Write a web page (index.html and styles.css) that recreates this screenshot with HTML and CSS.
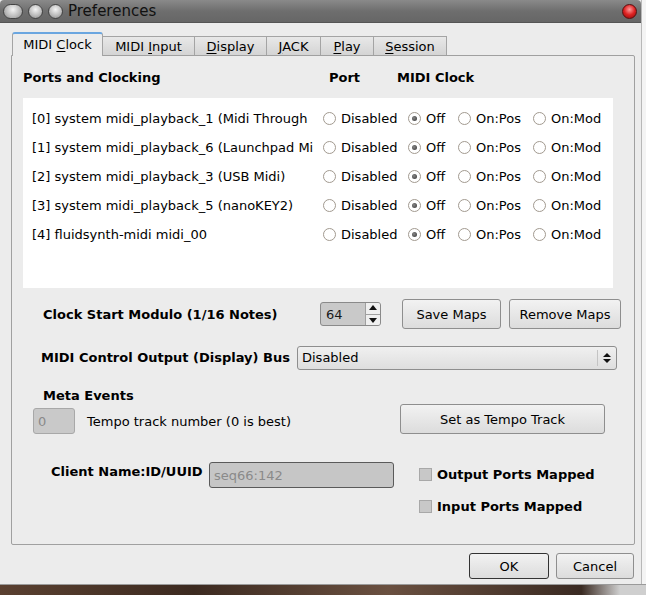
FILE: index.html
```html
<!DOCTYPE html>
<html>
<head>
<meta charset="utf-8">
<link rel="stylesheet" href="styles.css">
</head>
<body>
<div class="screen">
  <div class="window">
    <div class="titlebar">
      <div class="ghost">
        <div>with an incorrect port %ld", src);</div>
        <div>n incorrect port %ld", myport);</div>
      </div>
      <div class="wbtns">
        <span class="wb pill"></span>
        <span class="wb ball"></span>
        <span class="wb ball"></span>
      </div>
      <div class="title">Preferences</div>
      <span class="close"></span>
    </div>

    <div class="body">
      <div class="tabs">
        <div class="tab active"><span>MIDI <u>C</u>lock</span></div>
        <div class="tab"><span>MIDI <u>I</u>nput</span></div>
        <div class="tab"><span><u>D</u>isplay</span></div>
        <div class="tab"><span><u>J</u>ACK</span></div>
        <div class="tab"><span><u>P</u>lay</span></div>
        <div class="tab"><span><u>S</u>ession</span></div>
      </div>
      <div class="panel">
        <div class="hdr">
          <span class="hdr-title">Ports and Clocking</span>
          <span class="hdr-port">Port</span>
          <span class="hdr-clock">MIDI Clock</span>
        </div>
        <div class="ports">
          <div class="prow">
            <span class="pname">[0] system midi_playback_1 (Midi Through</span>
            <span class="opt"><i class="radio"></i>Disabled</span>
            <span class="opt"><i class="radio on"></i>Off</span>
            <span class="opt"><i class="radio"></i>On:Pos</span>
            <span class="opt"><i class="radio"></i>On:Mod</span>
          </div>
          <div class="prow">
            <span class="pname">[1] system midi_playback_6 (Launchpad Mini)</span>
            <span class="opt"><i class="radio"></i>Disabled</span>
            <span class="opt"><i class="radio on"></i>Off</span>
            <span class="opt"><i class="radio"></i>On:Pos</span>
            <span class="opt"><i class="radio"></i>On:Mod</span>
          </div>
          <div class="prow">
            <span class="pname">[2] system midi_playback_3 (USB Midi)</span>
            <span class="opt"><i class="radio"></i>Disabled</span>
            <span class="opt"><i class="radio on"></i>Off</span>
            <span class="opt"><i class="radio"></i>On:Pos</span>
            <span class="opt"><i class="radio"></i>On:Mod</span>
          </div>
          <div class="prow">
            <span class="pname">[3] system midi_playback_5 (nanoKEY2)</span>
            <span class="opt"><i class="radio"></i>Disabled</span>
            <span class="opt"><i class="radio on"></i>Off</span>
            <span class="opt"><i class="radio"></i>On:Pos</span>
            <span class="opt"><i class="radio"></i>On:Mod</span>
          </div>
          <div class="prow">
            <span class="pname">[4] fluidsynth-midi midi_00</span>
            <span class="opt"><i class="radio"></i>Disabled</span>
            <span class="opt"><i class="radio on"></i>Off</span>
            <span class="opt"><i class="radio"></i>On:Pos</span>
            <span class="opt"><i class="radio"></i>On:Mod</span>
          </div>
        </div>

        <div class="row clock-row">
          <span class="lbl b clock-lbl">Clock Start Modulo (1/16 Notes)</span>
          <div class="spin">
            <span class="spin-val">64</span>
            <span class="spin-arrows">
              <span class="sa up"></span>
              <span class="sa down"></span>
            </span>
          </div>
          <button class="btn save">Save Maps</button>
          <button class="btn remove">Remove Maps</button>
        </div>

        <div class="row combo-row">
          <span class="lbl b combo-lbl">MIDI Control Output (Display) Bus</span>
          <div class="combo">
            <span class="combo-val">Disabled</span>
            <span class="combo-sep"></span>
            <span class="combo-arr">
              <span class="ca up"></span>
              <span class="ca down"></span>
            </span>
          </div>
        </div>

        <div class="meta-lbl b">Meta Events</div>
        <div class="row tempo-row">
          <span class="edit small">0</span>
          <span class="lbl tempo-lbl">Tempo track number (0 is best)</span>
          <button class="btn tempo-btn">Set as Tempo Track</button>
        </div>

        <div class="client">
          <span class="lbl b client-lbl">Client Name:ID/UUID</span>
          <span class="edit client-edit">seq66:142</span>
          <div class="checks">
            <div class="chk"><i class="box"></i><span class="b">Output Ports Mapped</span></div>
            <div class="chk"><i class="box"></i><span class="b">Input Ports Mapped</span></div>
          </div>
        </div>
      </div>

      <div class="footer">
        <button class="btn ok">OK</button>
        <button class="btn cancel">Cancel</button>
      </div>
    </div>
  </div>
  <div class="desk"></div>
</div>
</body>
</html>
```

FILE: styles.css
```css
* { box-sizing: border-box; }
html, body { margin: 0; padding: 0; }
body {
  width: 646px;
  height: 595px;
  overflow: hidden;
  background: #f4f4f4;
  font-family: "DejaVu Sans", sans-serif;
  font-size: 13px;
  color: #000;
}
.screen { width: 646px; height: 595px; display: flex; flex-direction: column; }
.window {
  width: 642px;
  height: 584px;
  background: #ececec;
  border-right: 1px solid #b8b8b8;
  display: flex;
  flex-direction: column;
}
.desk {
  height: 11px;
  background: linear-gradient(90deg, #5a4030 0%, #3c2a20 30%, #6a5040 60%, #3a2a22 90%, #cfcfcf 96%);
  border-top: 1px solid #9a9a9a;
}

/* title bar */
.titlebar {
  position: relative;
  height: 23px;
  background: linear-gradient(#8a8a8a, #6e6e6e 50%, #666 100%);
  border-bottom: 1px solid #555;
  display: flex;
  align-items: center;
  overflow: hidden;
  border-radius: 4px 4px 0 0;
}
.ghost {
  position: absolute;
  left: 2px;
  top: -4px;
  font-family: "DejaVu Sans Mono", monospace;
  font-size: 15px;
  line-height: 15px;
  color: rgba(200,200,200,0.26);
  white-space: pre;
}
.ghost div:first-child { padding-left: 6px; }
.wbtns { display: flex; align-items: center; gap: 5px; margin-left: 3px; position: relative; }
.wb {
  display: inline-block;
  height: 15px;
  border: 1px solid #444;
  background: radial-gradient(circle at 50% 35%, #f4f4f4 0%, #bdbdbd 55%, #8c8c8c 100%);
}
.pill { width: 20px; border-radius: 8px; }
.ball { width: 15px; border-radius: 50%; }
.title {
  position: relative;
  margin-left: 5px;
  font-size: 15px;
  color: #111;
}
.close {
  position: absolute;
  right: 4px;
  top: 4px;
  width: 15px;
  height: 15px;
  border-radius: 50%;
  border: 1px solid #5a1010;
  background: radial-gradient(circle at 50% 35%, #ff9a9a 0%, #d22 50%, #8a0a0a 100%);
}

/* body */
.body { flex: 1; display: flex; flex-direction: column; padding: 10px 0 0 11px; }
.tabs { display: flex; align-items: flex-end; height: 22px; padding-left: 1px; position: relative; z-index: 2; }
.tab {
  height: 19px;
  display: flex;
  align-items: center;
  justify-content: center;
  border: 1px solid #a4a4a4;
  border-bottom: none;
  border-left: none;
  background: linear-gradient(#e8e8e8, #d4d4d4);
  font-size: 13px;
  white-space: nowrap;
}
.tab.active {
  width: 91px;
  height: 24px;
  border-left: 1px solid #a4a4a4;
  border-top: 2px solid #6aa6e0;
  border-radius: 3px 3px 0 0;
  background: #ececec;
  margin-bottom: -1px;
  padding-bottom: 1px;
}
.tab:nth-child(2) { width: 92px; }
.tab:nth-child(3) { width: 72px; }
.tab:nth-child(4) { width: 54px; }
.tab:nth-child(5) { width: 53px; }
.tab:nth-child(6) { width: 73px; }
u { text-decoration: underline; text-underline-offset: 2px; }

.panel {
  width: 624px;
  height: 490px;
  border: 1px solid #a0a0a0;
  border-radius: 0 2px 2px 2px;
  background: #ececec;
  display: flex;
  flex-direction: column;
}
.b { font-weight: bold; }

.hdr { display: flex; align-items: center; height: 20px; margin-top: 11px; font-weight: bold; }
.hdr-title { margin-left: 11px; width: 306px; }
.hdr-port { width: 68px; }

.ports {
  margin: 11px 0 0 11px;
  width: 590px;
  height: 190px;
  background: #fff;
  padding-top: 6px;
}
.prow {
  height: 29px;
  display: grid;
  grid-template-columns: 291px 85px 50px 75px 1fr;
  align-items: center;
  padding-left: 9px;
}
.pname { white-space: nowrap; overflow: hidden; max-width: 281px; }
.opt { display: flex; align-items: center; white-space: nowrap; }
.radio {
  display: inline-block;
  width: 13px;
  height: 13px;
  border-radius: 50%;
  border: 1px solid #a29a90;
  background: #fff;
  margin-right: 5px;
  position: relative;
  flex: none;
}
.radio.on::after {
  content: "";
  position: absolute;
  left: 3px; top: 3px;
  width: 5px; height: 5px;
  border-radius: 50%;
  background: radial-gradient(circle at 40% 40%, #888, #333);
}

.row { display: flex; align-items: center; }
.clock-row { height: 30px; margin-top: 11px; }
.clock-lbl { margin-left: 31px; width: 277px; }
.spin {
  width: 61px;
  height: 24px;
  border: 1px solid #8a8a8a;
  border-radius: 3px;
  background: #c9c9c9;
  display: flex;
  align-items: center;
  justify-content: space-between;
}
.spin-val { margin-left: 5px; color: #1a1a1a; }
.spin-arrows {
  width: 15px;
  height: 22px;
  border-left: 1px solid #a0a0a0;
  background: #efefef;
  display: flex;
  flex-direction: column;
  border-radius: 0 2px 2px 0;
}
.sa { flex: 1; position: relative; }
.sa.up { border-bottom: 1px solid #a0a0a0; }
.sa::after {
  content: "";
  position: absolute;
  left: 3px; top: 3px;
  border-left: 4px solid transparent;
  border-right: 4px solid transparent;
}
.sa.up::after { border-bottom: 5px solid #111; top: 2px; }
.sa.down::after { border-top: 5px solid #111; top: 3px; }

.btn {
  font-family: "DejaVu Sans", sans-serif;
  font-size: 13px;
  color: #000;
  height: 30px;
  border: 1px solid #8e8e8e;
  border-radius: 3px;
  background: linear-gradient(#f2f2f2, #dcdcdc);
  padding: 0;
}
.save { margin-left: 21px; width: 99px; }
.remove { margin-left: 8px; width: 112px; }

.combo-row { height: 23px; margin-top: 17px; }
.combo-lbl { margin-left: 29px; width: 256px; }
.combo {
  width: 320px;
  height: 24px;
  border: 1px solid #8e8e8e;
  border-radius: 3px;
  background: linear-gradient(#f0f0f0, #dedede);
  display: flex;
  align-items: center;
}
.combo-val { margin-left: 4px; flex: 1; }
.combo-sep { width: 1px; height: 16px; background: #c4c4c4; }
.combo-arr { width: 18px; display: flex; flex-direction: column; align-items: center; gap: 2px; }
.ca { width: 0; height: 0; border-left: 4px solid transparent; border-right: 4px solid transparent; }
.ca.up { border-bottom: 4px solid #111; }
.ca.down { border-top: 4px solid #111; }

.meta-lbl { margin: 19px 0 0 31px; height: 16px; line-height: 16px; }
.tempo-row { height: 30px; margin-top: 0; align-items: flex-end; }
.edit {
  display: flex;
  align-items: center;
  height: 26px;
  border: 1px solid #a8a8a8;
  border-radius: 3px;
  background: #c9c9c9;
  color: #8a8a8a;
  padding-left: 4px;
}
.small { margin-left: 21px; width: 42px; }
.tempo-lbl { margin-left: 12px; width: 313px; height: 26px; display: flex; align-items: center; }
.tempo-btn { width: 205px; }

.client { display: flex; margin-top: 28px; align-items: flex-start; }
.client-lbl { margin-left: 39px; width: 158px; line-height: 20px; }
.client-edit { width: 185px; border-color: #5a5a5a; background: #c6c6c6; }
.checks { margin-left: 25px; display: flex; flex-direction: column; gap: 19px; padding-top: 6px; }
.chk { display: flex; align-items: center; height: 13px; }
.box {
  width: 13px; height: 13px;
  border: 1px solid #a8a8a8;
  background: #c8c8c8;
  margin-right: 5px;
}

.footer { display: flex; justify-content: flex-end; gap: 7px; margin-top: 8px; padding-right: 7px; }
.ok { width: 80px; height: 26px; border-color: #333; }
.cancel { width: 78px; height: 26px; }
```
